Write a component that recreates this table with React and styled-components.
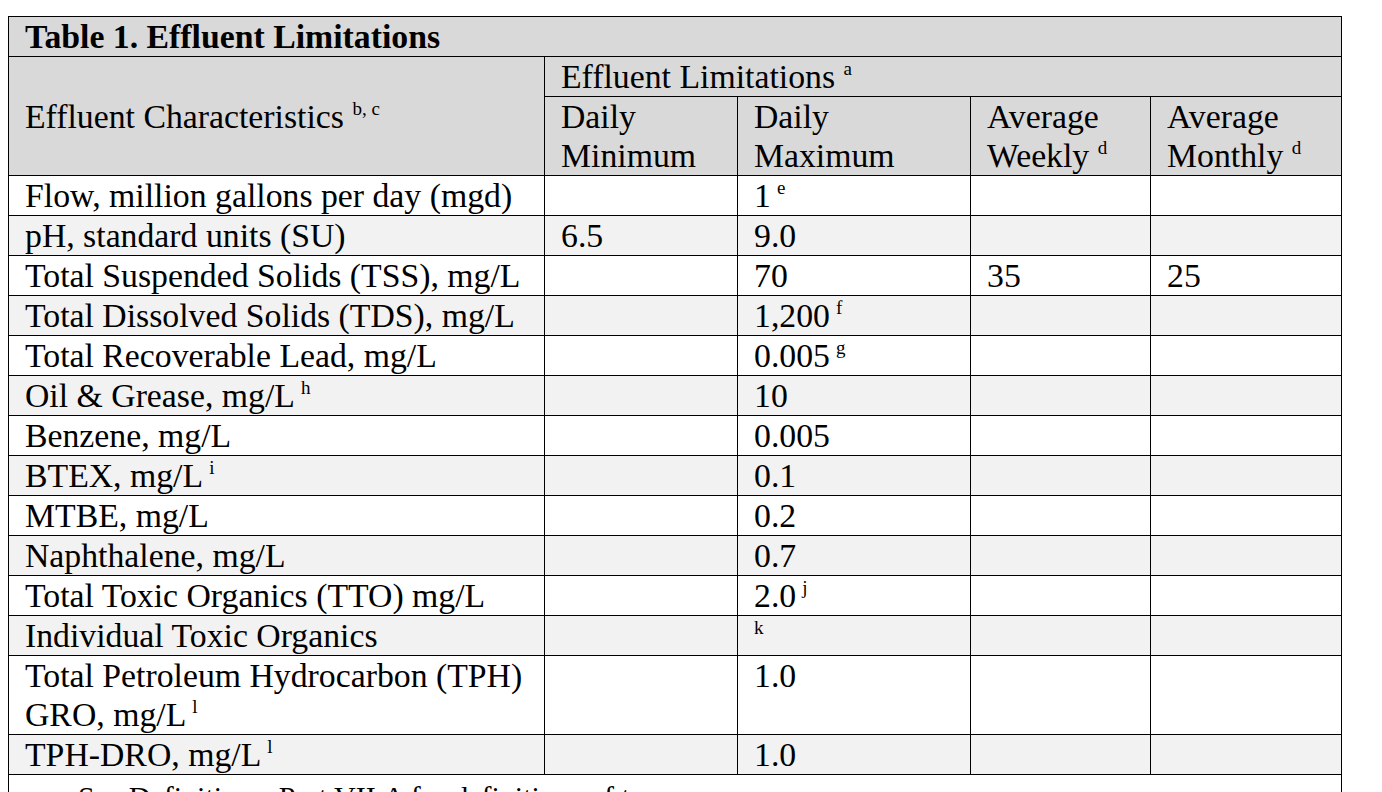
import React from "react";
import styled, { createGlobalStyle } from "styled-components";

const GlobalStyle = createGlobalStyle`
    body {
        margin: 0;
        background: #ffffff;
        font-family: "Liberation Serif", "Times New Roman", serif;
        color: #000;
    }
`;

const Page = styled.div`
    padding: 16px 0 0 8px;
`;

const Table = styled.table`
    border-collapse: collapse;
    table-layout: fixed;
    width: 1334px;
    font-size: 33.75px;
    line-height: 39px;
`;

const Row = styled.tr`
    background: ${(p) => (p.$shade ? "#f2f2f2" : "#ffffff")};
`;

const HeadRow = styled.tr`
    background: #d9d9d9;
`;

const Cell = styled.td`
    border: 1px solid #000;
    padding: 0 0 0 16px;
    vertical-align: ${(p) => (p.$middle ? "middle" : "top")};
    white-space: nowrap;
    overflow: hidden;
    font-weight: ${(p) => (p.$bold ? 700 : 400)};
`;

const Note = styled.td`
    border: 1px solid #000;
    border-bottom: none;
    padding: 2px 0 0 69px;
    height: 40px;
    vertical-align: top;
    background: #fff;
    font-size: 30px;
    white-space: nowrap;
`;

const Sup = styled.sup`
    font-size: 19px;
    line-height: 0;
    vertical-align: 13px;
    margin-left: ${(p) => (p.$tight ? "6px" : "0")};
`;

const rows = [
    { name: "Flow, million gallons per day (mgd)", max: "1", maxSup: "e" },
    { name: "pH, standard units (SU)", min: "6.5", max: "9.0" },
    { name: "Total Suspended Solids (TSS), mg/L", max: "70", week: "35", month: "25" },
    { name: "Total Dissolved Solids (TDS), mg/L", max: "1,200", maxSup: "f" },
    { name: "Total Recoverable Lead, mg/L", max: "0.005", maxSup: "g" },
    { name: "Oil & Grease, mg/L", nameSup: "h", max: "10" },
    { name: "Benzene, mg/L", max: "0.005" },
    { name: "BTEX, mg/L", nameSup: "i", max: "0.1" },
    { name: "MTBE, mg/L", max: "0.2" },
    { name: "Naphthalene, mg/L", max: "0.7" },
    { name: "Total Toxic Organics (TTO) mg/L", max: "2.0", maxSup: "j" },
    { name: "Individual Toxic Organics", max: "", maxSup: "k" },
    { name: ["Total Petroleum Hydrocarbon (TPH)", "GRO, mg/L"], nameSup: "l", max: "1.0" },
    { name: "TPH-DRO, mg/L", nameSup: "l", max: "1.0" },
];

function Label({ text, sup }) {
    const lines = Array.isArray(text) ? text : [text];
    return (
        <>
            {lines.map((line, i) => (
                <React.Fragment key={i}>
                    {i > 0 && <br />}
                    {line}
                </React.Fragment>
            ))}
            {sup && <Sup $tight={text !== ""}>{sup}</Sup>}
        </>
    );
}

export default function App() {
    return (
        <Page>
            <GlobalStyle />
            <Table>
                <colgroup>
                    <col style={{ width: "536px" }} />
                    <col style={{ width: "193px" }} />
                    <col style={{ width: "233px" }} />
                    <col style={{ width: "180px" }} />
                    <col style={{ width: "191px" }} />
                </colgroup>
                <tbody>
                    <HeadRow>
                        <Cell colSpan={5} $bold>
                            Table 1. Effluent Limitations
                        </Cell>
                    </HeadRow>
                    <HeadRow>
                        <Cell rowSpan={2} $middle>
                            Effluent Characteristics <Sup>b, c</Sup>
                        </Cell>
                        <Cell colSpan={4}>
                            Effluent Limitations <Sup>a</Sup>
                        </Cell>
                    </HeadRow>
                    <HeadRow>
                        <Cell>
                            Daily
                            <br />
                            Minimum
                        </Cell>
                        <Cell>
                            Daily
                            <br />
                            Maximum
                        </Cell>
                        <Cell>
                            Average
                            <br />
                            Weekly <Sup>d</Sup>
                        </Cell>
                        <Cell>
                            Average
                            <br />
                            Monthly <Sup>d</Sup>
                        </Cell>
                    </HeadRow>
                    {rows.map((r, i) => (
                        <Row key={i} $shade={i % 2 === 1}>
                            <Cell>
                                <Label text={r.name} sup={r.nameSup} />
                            </Cell>
                            <Cell>{r.min}</Cell>
                            <Cell>
                                <Label text={r.max} sup={r.maxSup} />
                            </Cell>
                            <Cell>{r.week}</Cell>
                            <Cell>{r.month}</Cell>
                        </Row>
                    ))}
                    <tr>
                        <Note colSpan={5}>See Definitions, Part VII.A for definitions of terms.</Note>
                    </tr>
                </tbody>
            </Table>
        </Page>
    );
}
